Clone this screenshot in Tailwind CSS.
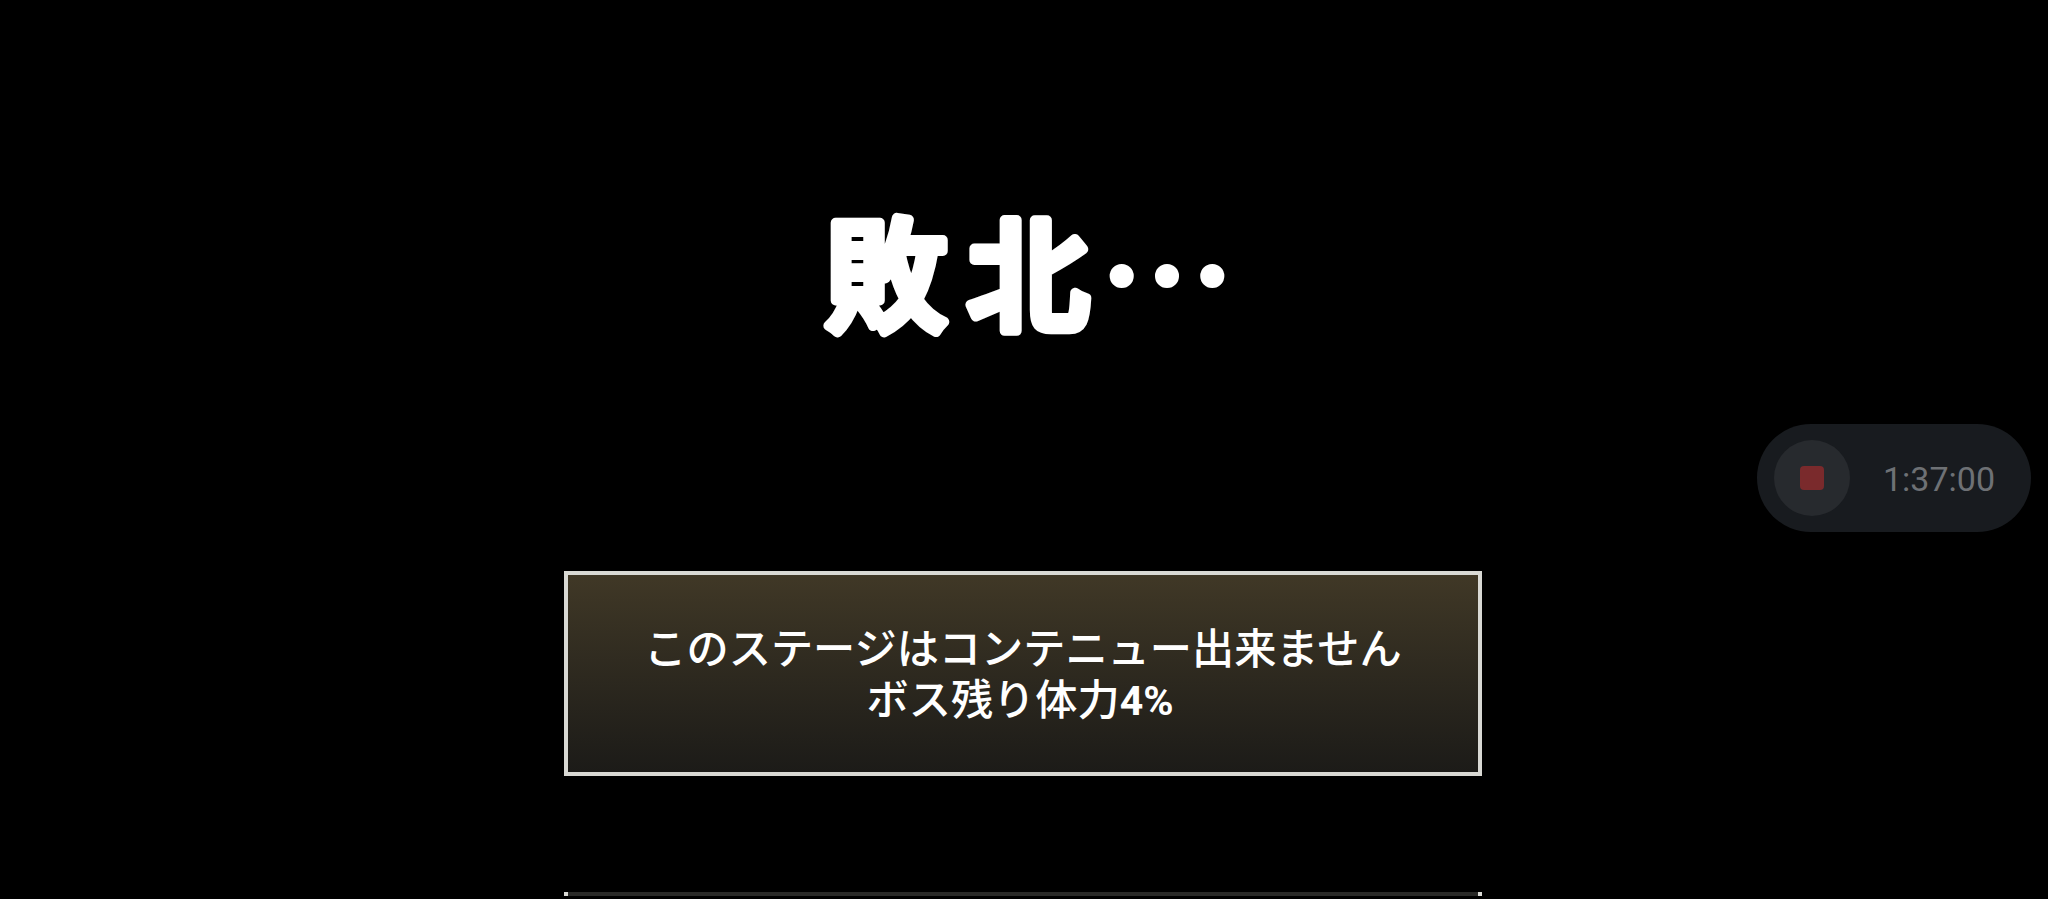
<!DOCTYPE html>
<html lang="ja">
<head>
  <meta charset="UTF-8" />
  <title>敗北</title>
  <script src="https://cdn.jsdelivr.net/npm/@tailwindcss/browser@4"></script>
</head>
<body class="bg-black text-white h-[899px] overflow-hidden relative font-['Noto_Sans_CJK_JP',sans-serif]">
  <main class="flex flex-col items-center pr-[2px]">
    <!-- Title: svg text so the stroke can have round joins -->
    <svg class="mt-[192px] w-[430px] h-[170px] overflow-visible" viewBox="0 0 430 170" role="img" aria-label="敗北…">
      <text y="129" class="fill-white stroke-white text-[122px] font-medium stroke-[10px] [stroke-linejoin:round] [stroke-linecap:round]">
        <tspan x="17">敗</tspan><tspan x="159">北</tspan><tspan x="291" y="136" class="text-[136px] font-bold stroke-[2px]">…</tspan>
      </text>
    </svg>

    <!-- Message box -->
    <div class="mt-[209px] w-[918px] h-[205px] border-4 border-[#d9d9d4] bg-gradient-to-b from-[#403826] to-[#1c1b18] flex flex-col items-center justify-center text-[42.2px] leading-[51px] font-medium">
      <p>このステージはコンテニュー出来ません</p>
      <p class="pr-[6px]">ボス残り体力<span class="font-['Roboto',sans-serif] text-[41px] font-bold">4%</span></p>
    </div>

    <!-- Next box, cut off by the window -->
    <div class="mt-[116px] w-[918px] h-[40px] border-t-4 border-[#2a2a28] relative">
      <span class="absolute -top-1 left-0 w-1 h-1 bg-[#d9d9d4]"></span>
      <span class="absolute -top-1 right-0 w-1 h-1 bg-[#d9d9d4]"></span>
    </div>
  </main>

  <!-- Screen recorder pill -->
  <div class="absolute left-[1757px] top-[424px] w-[274px] h-[108px] rounded-full bg-[#181b1f] flex items-center pl-[17px] gap-[33px]">
    <div class="w-[76px] h-[76px] rounded-full bg-[#272a2e] flex items-center justify-center">
      <div class="w-[24px] h-[24px] rounded-[4px] bg-[#7a2a2c]"></div>
    </div>
    <span class="font-['Roboto',sans-serif] text-[34px] text-[#6e7175] pt-[2px]">1:37:00</span>
  </div>
</body>
</html>
